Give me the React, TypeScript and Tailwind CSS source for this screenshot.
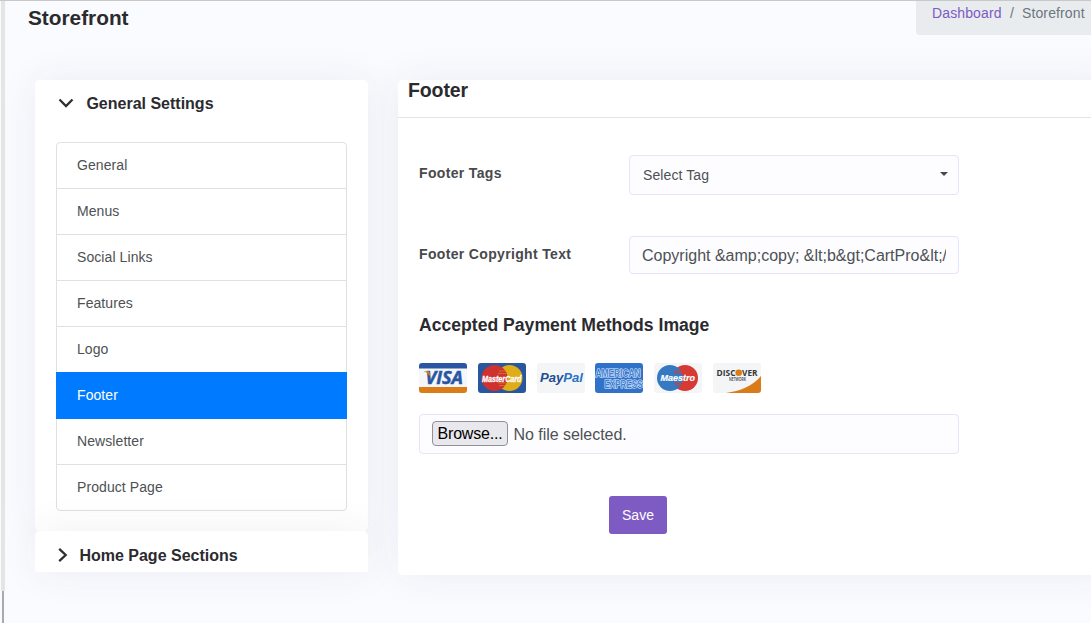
import type { ReactNode } from 'react';

const sections = ['General', 'Menus', 'Social Links', 'Features', 'Logo', 'Footer', 'Newsletter', 'Product Page'];

function Breadcrumb() {
  return (
    <nav className="flex h-[34px] w-[175px] shrink-0 rounded-bl bg-[#e9ecef] pl-4 pt-[2px] text-[14px] leading-[21px] tracking-[0.12px] whitespace-nowrap">
      <a className="w-[70px] text-[#7d5ac4]">Dashboard</a>
      <span className="w-5 text-center text-[#6c757d]">/</span>
      <span className="text-[#6c757d]">Storefront</span>
    </nav>
  );
}

function Sidebar() {
  return (
    <aside className="flex w-[333px] shrink-0 flex-col">
      <section className="h-[451px] rounded-[5px] bg-white px-[21px] shadow-[0_0_40px_rgba(50,60,90,0.07)]">
        <header className="flex h-[62px] items-start pt-[12px] pl-[2px]">
          <svg className="mt-[3px] h-4 w-4" viewBox="0 0 16 16" fill="none" stroke="#303034" strokeWidth="2.3">
            <path d="M1.5 4.5 8 11l6.500-6.500" />
          </svg>
          <h2 className="ml-[12.4px] text-[16px] leading-6 font-bold text-[#2b2b2f]">General Settings</h2>
        </header>
        <ul className="w-[291px] rounded border border-[#dee0e2] tracking-[0.08px]">
          {sections.map((s) => (
            <li
              key={s}
              className={
                s === 'Footer'
                  ? '-mx-px -mt-px flex h-[47px] items-center border-b border-[#007bff] bg-[#007bff] pl-[21px] text-[14px] text-white'
                  : 'flex h-[46px] items-center border-b border-[#dee0e2] pl-5 text-[14px] text-[#4d5154] last:h-[45px] last:border-b-0'
              }
            >
              {s}
            </li>
          ))}
        </ul>
      </section>
      <section className="flex h-[41px] items-start rounded-t-[5px] bg-white pt-[13px] pl-[20px] shadow-[0_0_40px_rgba(50,60,90,0.07)]">
        <svg className="mt-[3px] h-4 w-4" viewBox="0 0 16 16" fill="none" stroke="#303034" strokeWidth="2.300">
          <path d="M4.200 1.800 10.700 8l-6.500 6.200" />
        </svg>
        <h2 className="ml-[8.4px] text-[16px] leading-6 font-bold text-[#2b2b2f]">Home Page Sections</h2>
      </section>
    </aside>
  );
}

function PayCard({ children, label, bg }: { children: ReactNode; label: string; bg: string }) {
  return (
    <svg role="img" aria-label={label} className="h-[30px] w-[48px] rounded-[3px]" viewBox="0 0 48 30">
      <rect width="48" height="30" fill={bg} />
      {children}
    </svg>
  );
}

function PaymentMethods() {
  return (
    <div className="flex h-[30px] w-[342px] justify-between font-['Open_Sans',sans-serif]">
      <PayCard label="Visa" bg="#f5f6f8">
        <path d="M0 0h48v5.500H0z" fill="#2856a3" />
        <path d="M0 24h48v6H0z" fill="#dc7c18" />
        <text x="6.500" y="21.300" fontSize="18" fontWeight="700" fontStyle="italic" fill="#2856a3" stroke="#2856a3" strokeWidth="0.500" textLength="37.500" lengthAdjust="spacingAndGlyphs">VISA</text>
        <path d="M4.500 8.300H10l2.200 7C10 11.500 8 9.500 4.500 8.300z" fill="#dc7c18" />
      </PayCard>
      <PayCard label="MasterCard" bg="#28579f">
        <circle cx="31.500" cy="15" r="13" fill="#dfad17" />
        <circle cx="16.500" cy="15" r="13" fill="#cf3030" />
        <path d="M21 8h7M20 10.500h8M20 20h8M21 22.500h7" stroke="#dfad17" strokeWidth="0.500" />
        <text x="4" y="18.500" fontFamily="Liberation Sans, sans-serif" fontSize="8.500" fontWeight="700" fontStyle="italic" fill="#fff" stroke="#fff" strokeWidth="0.300" textLength="39.500" lengthAdjust="spacingAndGlyphs">MasterCard</text>
      </PayCard>
      <PayCard label="PayPal" bg="#f4f5f7">
        <text x="3" y="19.300" fontFamily="Liberation Sans, sans-serif" fontSize="13" fontWeight="700" fontStyle="italic" fill="#2860ab" textLength="43" lengthAdjust="spacingAndGlyphs">
          <tspan fill="#234d91">Pay</tspan><tspan fill="#2872c4">Pal</tspan>
        </text>
      </PayCard>
      <PayCard label="American Express" bg="#3072c9">
        <g fontFamily="Liberation Sans, sans-serif" fontSize="10" fontWeight="700" fill="#3f7fd0" stroke="#e8f1ff" strokeWidth="1.200" paintOrder="stroke">
          <text x="0.500" y="14.200" textLength="45" lengthAdjust="spacingAndGlyphs">AMERICAN</text>
          <text x="9.500" y="24.500" textLength="38" lengthAdjust="spacingAndGlyphs">EXPRESS</text>
        </g>
      </PayCard>
      <PayCard label="Maestro" bg="#f4f5f7">
        <circle cx="31" cy="15" r="13" fill="#d63a32" />
        <circle cx="16" cy="15" r="13" fill="#3579c3" />
        <path d="M20 8h8M20 10.500h8M20 20h8M21 22.500h7" stroke="#d63a32" strokeWidth="0.900" />
        <text x="6.500" y="18.300" fontFamily="Liberation Sans, sans-serif" fontSize="9.500" fontWeight="700" fontStyle="italic" fill="#fff" stroke="#fff" strokeWidth="0.200" textLength="34.500" lengthAdjust="spacingAndGlyphs">Maestro</text>
      </PayCard>
      <PayCard label="Discover" bg="#f4f5f7">
        <path d="M48 13v17H13C27 28 40 23 48 13z" fill="#d97b18" />
        <text x="3.500" y="13" fontSize="9" fontWeight="700" fill="#33373b" textLength="19" lengthAdjust="spacingAndGlyphs">DISC</text>
        <circle cx="25.700" cy="9.700" r="3.300" fill="#df7b16" />
        <text x="29" y="13" fontSize="9" fontWeight="700" fill="#33373b" textLength="15.500" lengthAdjust="spacingAndGlyphs">VER</text>
        <text x="16" y="18" fontSize="4.500" fontWeight="600" fill="#33373b" textLength="17" lengthAdjust="spacingAndGlyphs">NETWORK</text>
      </PayCard>
    </div>
  );
}

function FooterPanel() {
  return (
    <section className="h-[495px] w-[720px] shrink-0 rounded-[5px] bg-white shadow-[0_0_40px_rgba(50,60,90,0.07)]">
      <header className="h-[38px] border-b border-[#e2e5e5] pl-[10px]">
        <h2 className="text-[19.500px] leading-[21px] font-bold tracking-[-0.1px] text-[#2b2b2f]">Footer</h2>
      </header>
      <form className="flex w-[561px] flex-col pt-[37px] pl-[21px]">
        <div className="flex h-10 items-start">
          <label className="w-[210px] pt-[8px] text-[14px] leading-[21px] font-bold tracking-[0.34px] text-[#48494d]">Footer Tags</label>
          <div className="flex h-10 w-[330px] items-center justify-between rounded-[4px] border border-[#e4e4fb] bg-[#fdfdff] pr-[10px] pl-[13px] text-[14px] tracking-[0.1px] text-[#4d5154]">
            Select Tag
            <svg className="mt-[-3px] h-[4px] w-[8px]" viewBox="0 0 8 4">
              <path d="M0 0h8L4 4z" fill="#444950" />
            </svg>
          </div>
        </div>
        <div className="mt-[41px] flex h-[38px] items-start">
          <label className="w-[210px] pt-[8px] text-[14px] leading-[21px] font-bold tracking-[0.34px] text-[#48494d]">Footer Copyright Text</label>
          <div className="h-[38px] w-[330px] rounded-[4px] border border-[#e4e4fb] bg-[#fdfdff] px-3 text-[16px] leading-[37px] text-[#4d5154]">
            <div className="overflow-hidden whitespace-nowrap">{'Copyright &amp;copy; &lt;b&gt;CartPro&lt;/'}</div>
          </div>
        </div>
        <h3 className="mt-[38px] mb-[24px] text-[17.6px] leading-[27px] font-bold text-[#2b2b2f]">Accepted Payment Methods Image</h3>
        <PaymentMethods />
        <div className="mt-[21px] flex h-10 items-center rounded-[4px] border border-[#e4e4fb] bg-[#fdfdff] pl-3 text-[16px] text-[#4d5154]">
          <button type="button" className="mr-[5.500px] mt-[-2px] h-[25px] w-[76px] rounded-[4px] border border-[#8f8f9d] bg-[#e9e9ed] pt-px leading-[22px] tracking-[-0.200px] text-black">Browse...</button>
          <span className="pt-px tracking-[-0.040px]">No file selected.</span>
        </div>
        <button type="button" className="mt-[42px] ml-[190px] h-[38px] w-[58px] rounded-[3px] bg-[#7e5bc2] text-[14px] text-white">Save</button>
      </form>
    </section>
  );
}

export default function App() {
  return (
    <div className="flex h-[623px] w-[1091px] overflow-hidden border-t border-[#c8c8c8] bg-[#fafbff] font-['Liberation_Sans',Arial,sans-serif]">
      <div className="flex w-[5px] shrink-0 flex-col bg-[#fafbff] pl-px">
        <div className="h-[590px] w-1 bg-[#e3e6e5]" />
        <div className="ml-px h-8 w-[2px] bg-[#aaaaac]" />
      </div>
      <main className="w-[1086px] shrink-0">
        <header className="flex h-[79px] items-start justify-between pl-[23px]">
          <h1 className="pt-[3px] text-[20.800px] leading-7 font-bold text-[#2b2b2f]">Storefront</h1>
          <Breadcrumb />
        </header>
        <div className="flex items-start gap-[30px] pl-[30px]">
          <Sidebar />
          <FooterPanel />
        </div>
      </main>
    </div>
  );
}
